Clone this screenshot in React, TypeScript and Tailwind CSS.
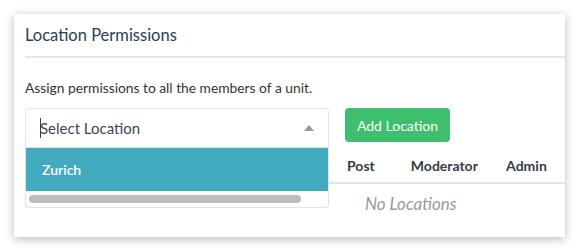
import React from 'react';

const columns = [
  { label: 'Post', width: 'w-[65px]' },
  { label: 'Moderator', width: 'w-[97px]' },
  { label: 'Admin', width: 'w-[60px]' },
];

export default function App() {
  return (
    <div className="w-[578px] h-[252px] bg-white p-[14px] font-['Lato',sans-serif] overflow-hidden">
      <div className="w-[551px] h-[223px] bg-white shadow-[0_2px_9px_rgba(0,0,0,0.28)]">
        <div className="pl-[11px]">
          <div className="h-[42px] flex items-center pt-[1px] text-[16.5px] text-[#2c3e50]">
            Location Permissions
          </div>
          <div className="h-[2px] bg-[#e6e6e6]" />
        </div>

        <div className="pl-[11px]">
          <p className="mt-[21px] text-[13.8px] leading-[18px] text-[#333]">
            Assign permissions to all the members of a unit.
          </p>

          <div className="mt-[11px] flex items-start gap-4">
            <div className="relative w-[304px]">
              <div className="h-[40px] flex items-center justify-between border border-[#e3e3e3] rounded-t-[4px] pl-[14px] pr-[14px]">
                <span className="flex items-center text-[15px] text-[#3a4656]">
                  <span className="w-[1px] h-[20px] bg-[#2c3e50] mr-[-1px]" />
                  Select Location
                </span>
                <svg width="10" height="6" viewBox="0 0 10 6">
                  <path d="M0 6 L5 0 L10 6 Z" fill="#999" />
                </svg>
              </div>
              <div className="absolute left-0 top-[40px] z-10 w-[304px] bg-white border border-t-0 border-[#e3e3e3] rounded-b-[4px]">
                <div className="h-[43px] flex items-center pl-[16px] bg-[#41aabf] text-white text-[14px] font-semibold">
                  Zurich
                </div>
                <div className="h-[16px] px-[3px] pt-[4px]">
                  <div className="w-[272px] h-[8px] rounded-full bg-[#bdbdbd]" />
                </div>
              </div>
            </div>
            <button className="w-[105px] h-[34px] rounded-[4px] bg-[#3dbf6e] text-white text-[14px]">
              Add Location
            </button>
          </div>

          <div>
            <div className="h-[36px] flex items-center border-b-2 border-[#e3e3e3] text-[14px] font-bold text-[#333d45]">
              <div className="w-[328px]" />
              {columns.map((c) => (
                <div key={c.label} className={c.width}>
                  {c.label}
                </div>
              ))}
            </div>
            <div className="h-[40px] flex items-center pl-[340px] text-[17px] italic text-[#999]">
              No Locations
            </div>
          </div>
        </div>
      </div>
    </div>
  );
}
